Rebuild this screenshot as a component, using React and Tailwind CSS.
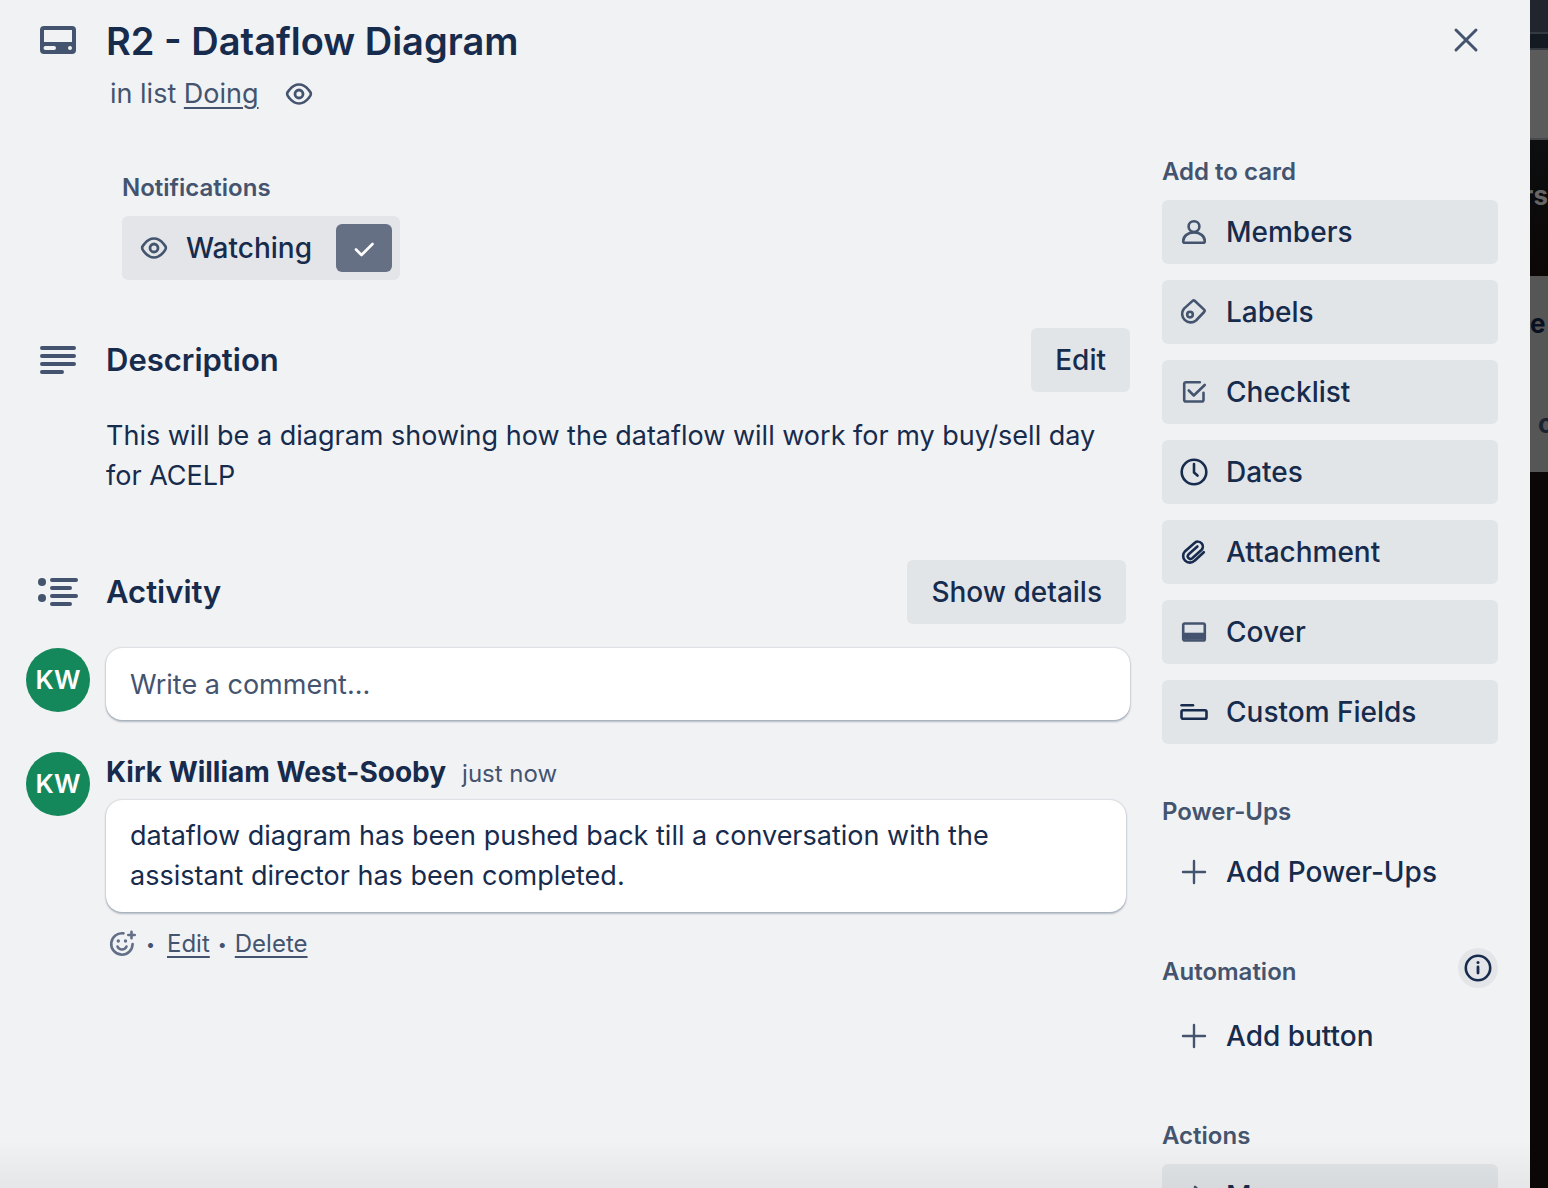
const stroke = {
  fill: "none",
  stroke: "currentColor",
  strokeWidth: 2.6,
  strokeLinecap: "round",
  strokeLinejoin: "round",
};

function Icon({ children, className = "" }) {
  return (
    <svg viewBox="0 0 32 32" aria-hidden="true" className={"size-8 shrink-0 " + className} {...stroke}>
      {children}
    </svg>
  );
}

const Eye = () => (
  <Icon>
    <path d="M4.1 16c0-1.2 1-2.7 2.2-4C8.600 9.100 12 6.500 16 6.500s7.400 2.600 9.700 5.500c1.200 1.300 2.200 2.800 2.200 4s-1 2.700-2.200 4c-2.300 2.900-5.700 5.500-9.700 5.500s-7.400-2.600-9.700-5.500c-1.200-1.300-2.200-2.800-2.200-4z" />
    <circle cx="16" cy="16" r="4" strokeWidth="2.8" />
  </Icon>
);

const Plus = () => (
  <Icon>
    <path d="M16 5v22M5 16h22" strokeWidth="2.4" />
  </Icon>
);

const muted = "text-[#44546f]";
const dark = "text-[#172b4d]";

const actions = [
  {
    label: "Members",
    icon: (
      <Icon className={muted}>
        <circle cx="16" cy="10.600" r="5.400" />
        <path d="M5.200 25.300C5.200 20 10 16.400 16 16.400s10.800 3.600 10.800 8.900c0 1-.5 1.500-1.500 1.500H6.700c-1 0-1.500-.5-1.500-1.500z" />
      </Icon>
    ),
  },
  {
    label: "Labels",
    icon: (
      <Icon className={muted}>
        <path d="M14.600 4.900 6 12.600a8.500 8.500 0 0 0 12 11.900l8.100-8.500c.7-.8.7-1.700 0-2.400l-9.200-8.600c-.8-.7-1.600-.7-2.300-.1z" />
        <circle cx="12" cy="18.600" r="2.800" />
      </Icon>
    ),
  },
  {
    label: "Checklist",
    icon: (
      <Icon className={muted}>
        <path d="M21.800 6.200H8c-1.100 0-1.800.7-1.800 1.800v15.700c0 1.100.7 1.800 1.800 1.800h15.700c1.100 0 1.800-.7 1.800-1.800v-7" />
        <path d="M10.800 14.500l5 5 10.900-10.500" />
      </Icon>
    ),
  },
  {
    label: "Dates",
    icon: (
      <Icon className={dark}>
        <circle cx="16" cy="16" r="12.300" />
        <path d="M16 8v8.600l3.500 3" />
      </Icon>
    ),
  },
  {
    label: "Attachment",
    icon: (
      <Icon className={dark}>
        <path d="M25.800 16.200l-9.200 8.500a6.700 6.700 0 0 1-9.500-9.500l9.700-8.400a4.900 4.900 0 0 1 6.900 6.900l-9.500 8.600a2.700 2.700 0 0 1-3.800-3.800l9-8" />
      </Icon>
    ),
  },
  {
    label: "Cover",
    icon: (
      <Icon className={muted}>
        <rect x="5.200" y="7.500" width="21.600" height="17" rx="1.600" />
        <path d="M6 16.700h20v7H6z" fill="currentColor" stroke="none" />
      </Icon>
    ),
  },
  {
    label: "Custom Fields",
    icon: (
      <Icon className={dark}>
        <path d="M3.600 9.300h11.400" />
        <rect x="3.500" y="14.200" width="25" height="8.600" rx="1.600" />
      </Icon>
    ),
  },
];

function SideButton({ icon, children, filled = true }) {
  return (
    <button
      type="button"
      className={
        "flex h-16 w-full items-center gap-4 rounded-md px-4 text-left text-[28px] leading-10 font-medium text-[#172b4d] " +
        (filled ? "bg-[#e2e5e8]" : "")
      }
    >
      {icon}
      {children}
    </button>
  );
}

function SideHeading({ children }) {
  return <h3 className="text-2xl leading-6 font-semibold text-[#44546f]">{children}</h3>;
}

function Avatar() {
  return (
    <span className="flex size-16 shrink-0 items-center justify-center rounded-full bg-[#14875b] text-[26px] leading-8 font-semibold text-white">
      KW
    </span>
  );
}

function SectionIcon({ children }) {
  return (
    <span className="flex w-16 shrink-0 justify-center text-[#44546f]">
      <svg viewBox="0 0 48 48" aria-hidden="true" className="size-12" fill="currentColor">
        {children}
      </svg>
    </span>
  );
}

function Board() {
  return (
    <aside className="flex w-[18px] shrink-0 flex-col overflow-hidden bg-[#0a0706] font-bold">
      <div className="h-8 shrink-0 bg-[#20252e]" />
      <div className="h-[18px] shrink-0 border-y-2 border-[#343a40] bg-[#131a22]" />
      <div className="h-[90px] shrink-0 border-b-2 border-[#48494c] bg-[#5b5b5b]" />
      <div className="flex h-[136px] shrink-0 justify-end bg-linear-to-b from-[#0c0e10] to-[#0b0706] pt-10 text-[26px] leading-8 text-[#666666]">
        rs
      </div>
      <div className="flex h-[196px] shrink-0 flex-col bg-[#565656] pt-8 text-[26px] leading-8">
        <span className="text-[#09101f]">e</span>
        <span className="mt-[68px] pl-2 text-[#1b2331]">c</span>
      </div>
    </aside>
  );
}

export default function App() {
  return (
    <div className="flex h-screen overflow-hidden bg-[#f1f2f4] font-[Inter,'Liberation_Sans',sans-serif] text-[#172b4d]">
      <div className="relative min-w-0 flex-1 overflow-hidden" role="dialog" aria-label="R2 - Dataflow Diagram">
        <header className="flex items-start gap-4 pt-4 pr-8 pl-[26px]">
          <SectionIcon>
            <path
              fillRule="evenodd"
              d="M10 10h28a4 4 0 0 1 4 4v20a4 4 0 0 1-4 4H10a4 4 0 0 1-4-4V14a4 4 0 0 1 4-4zm0 4v12h28V14zm1.500 16a2 2 0 0 0 0 4h8.500a2 2 0 0 0 0-4zm24.500 0a2 2 0 1 0 0 4 2 2 0 0 0 0-4z"
            />
          </SectionIcon>
          <div className="flex-1">
            <h1 className="text-[38px] leading-[50px] font-semibold">R2 - Dataflow Diagram</h1>
            <p className="mt-2 flex items-center pl-1 text-[27px] leading-10 text-[#44546f]">
              <span>
                in list <a href="#list" className="underline underline-offset-4">Doing</a>
              </span>
              <span className="ml-6"><Eye /></span>
            </p>
          </div>
          <button type="button" aria-label="Close" className="-mt-2 flex size-16 items-center justify-center text-[#44546f]">
            <Icon>
              <path d="M6 6l20 20M26 6L6 26" strokeWidth="3" />
            </Icon>
          </button>
        </header>

        <div className="flex gap-8 pr-8 pl-[26px]">
          <main className="min-w-0 flex-1">
            <section className="pt-[62px] pl-24">
              <h3 className="text-2xl leading-6 font-semibold text-[#44546f]">Notifications</h3>
              <button type="button" className="mt-4 flex h-16 items-center rounded-md bg-[#e4e5e9] pr-2 pl-4 text-[28px] leading-10 font-medium">
                <span className="mr-4 text-[#44546f]"><Eye /></span>
                Watching
                <span className="ml-6 flex h-12 w-14 items-center justify-center rounded-md bg-[#667085] text-white">
                  <Icon>
                    <path d="M8 17.500l5.500 5.500L24.500 12" strokeWidth="2.600" />
                  </Icon>
                </span>
              </button>
            </section>

            <section className="mt-12">
              <div className="flex items-center gap-4">
                <SectionIcon>
                  <rect x="6" y="10" width="36" height="4" rx="2" />
                  <rect x="6" y="18" width="36" height="4" rx="2" />
                  <rect x="6" y="26" width="36" height="4" rx="2" />
                  <rect x="6" y="34" width="24" height="4" rx="2" />
                </SectionIcon>
                <h2 className="flex-1 text-[31px] leading-10 font-semibold">Description</h2>
                <button type="button" className="h-16 rounded-md bg-[#e2e5e8] px-6 text-[28px] leading-10 font-medium">Edit</button>
              </div>
              <p className="mt-6 pl-20 text-[27px] leading-10">
                This will be a diagram showing how the dataflow will work for my buy/sell day for ACELP
              </p>
            </section>

            <section className="mt-16">
              <div className="flex items-center gap-4 pr-1">
                <SectionIcon>
                  <circle cx="8" cy="14" r="4" />
                  <circle cx="8" cy="30" r="4" />
                  <rect x="16" y="10" width="28" height="4" rx="2" />
                  <rect x="16" y="18" width="22" height="4" rx="2" />
                  <rect x="16" y="26" width="28" height="4" rx="2" />
                  <rect x="16" y="34" width="22" height="4" rx="2" />
                </SectionIcon>
                <h2 className="flex-1 text-[31px] leading-10 font-semibold">Activity</h2>
                <button type="button" className="h-16 rounded-md bg-[#e2e5e8] px-6 text-[28px] leading-10 font-medium">Show details</button>
              </div>

              <div className="mt-6 flex gap-4">
                <Avatar />
                <input
                  type="text"
                  aria-label="Write a comment"
                  placeholder="Write a comment..."
                  className="h-[72px] min-w-0 flex-1 rounded-2xl bg-white px-6 text-[27px] leading-10 shadow-[0_2px_2px_#091e4240,0_0_2px_#091e424f] placeholder:text-[#44546f]"
                />
              </div>

              <article className="mt-8 flex gap-4 pr-1">
                <Avatar />
                <div className="min-w-0 flex-1">
                  <div className="flex h-10 items-baseline gap-4 leading-10">
                    <span className="text-[28px] leading-10 font-bold">Kirk William West-Sooby</span>
                    <span className="text-2xl leading-10 text-[#44546f]">just now</span>
                  </div>
                  <p className="mt-2 rounded-2xl bg-white px-6 py-4 text-[27px] leading-10 shadow-[0_2px_2px_#091e4240,0_0_2px_#091e424f]">
                    dataflow diagram has been pushed back till a conversation with the assistant director has been completed.
                  </p>
                  <div className="mt-3 flex items-center text-2xl leading-10 text-[#44546f]">
                    <button type="button" aria-label="Add reaction" className="text-[#626f86]">
                      <Icon>
                        <path d="M17.500 5.400A10.700 10.700 0 1 0 26.600 16" />
                        <path d="M11.500 18.500c1 2.200 2.600 3 4.500 3s3.500-.8 4.500-3" />
                        <circle cx="12.300" cy="13" r="1.700" fill="currentColor" stroke="none" />
                        <circle cx="19.500" cy="13" r="1.700" fill="currentColor" stroke="none" />
                        <path d="M25.500 3.800v6.400M22.300 7h6.400" />
                      </Icon>
                    </button>
                    <span className="mr-3 ml-2 text-base">•</span>
                    <a href="#edit" className="underline underline-offset-4">Edit</a>
                    <span className="mx-2 text-base">•</span>
                    <a href="#delete" className="underline underline-offset-4">Delete</a>
                  </div>
                </div>
              </article>
            </section>
          </main>

          <aside className="w-[336px] shrink-0 pt-[46px]">
            <SideHeading>Add to card</SideHeading>
            <div className="mt-4 flex flex-col gap-4">
              {actions.map((a) => (
                <SideButton key={a.label} icon={a.icon}>{a.label}</SideButton>
              ))}
            </div>

            <div className="mt-14 flex flex-col gap-4">
              <SideHeading>Power-Ups</SideHeading>
              <SideButton filled={false} icon={<span className={muted}><Plus /></span>}>Add Power-Ups</SideButton>
            </div>

            <div className="mt-11 flex items-end justify-between">
              <div className="pb-1"><SideHeading>Automation</SideHeading></div>
              <button type="button" aria-label="About automation" className="flex size-10 items-center justify-center rounded-full bg-[#e4e5e9]">
                <Icon>
                  <circle cx="16" cy="16" r="12.200" />
                  <path d="M16 15v6" strokeWidth="2.800" />
                  <circle cx="16" cy="10.500" r="1.500" fill="currentColor" stroke="none" />
                </Icon>
              </button>
            </div>
            <div className="mt-4">
              <SideButton filled={false} icon={<span className={muted}><Plus /></span>}>Add button</SideButton>
            </div>

            <div className="mt-14 flex flex-col gap-4">
              <SideHeading>Actions</SideHeading>
              <SideButton
                icon={
                  <Icon className={muted}>
                    <path d="M5 16h22M17 7l10 9-10 9" />
                  </Icon>
                }
              >
                Move
              </SideButton>
            </div>
          </aside>
        </div>
        <div className="pointer-events-none absolute inset-x-0 bottom-0 h-12 bg-linear-to-b from-transparent to-black/5" />
      </div>
      <Board />
    </div>
  );
}
